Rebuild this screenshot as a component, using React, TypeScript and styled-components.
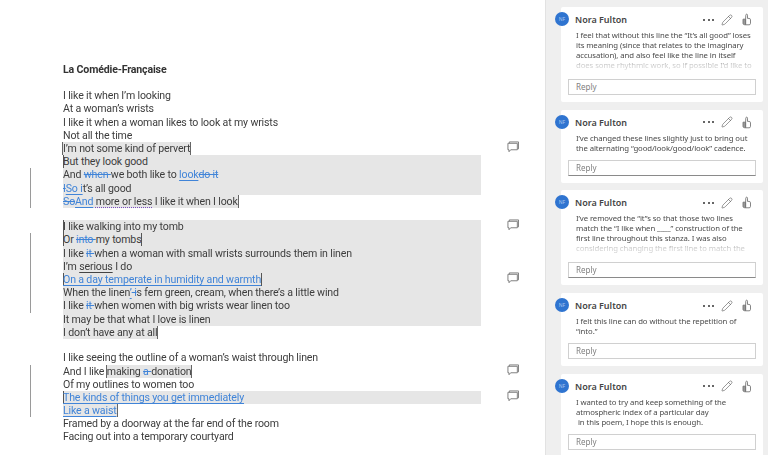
import React from 'react'
import styled, { createGlobalStyle, css } from 'styled-components'
import { Pencil } from 'lucide-react'

const GlobalStyle = createGlobalStyle`
    html, body {
        margin: 0;
        padding: 0;
        background: #fff;
    }
    #root {
        width: 768px;
        height: 455px;
        overflow: hidden;
    }
`

const Page = styled.div`
    display: flex;
    width: 768px;
    height: 455px;
    overflow: hidden;
    filter: blur(0.4px);
`

const Doc = styled.main`
    width: 545px;
    flex-shrink: 0;
    box-sizing: border-box;
    padding: 63px 64px 0 63px;
    font-family: 'Roboto', 'Noto Sans', sans-serif;
    font-size: 10.6px;
    letter-spacing: -0.16px;
    line-height: 13.18px;
    color: #3d3d3d;
`

const Title = styled.h1`
    margin: 0 0 13px;
    font: inherit;
    font-weight: 700;
    color: #333;
`

const Stanza = styled.section`
    margin-bottom: 12.4px;
`

const Line = styled.div<{ $full?: boolean; $changed?: boolean }>`
    position: relative;
    white-space: nowrap;
    ${({ $full }) =>
        $full &&
        css`
            background: #e6e6e6;
        `}
    ${({ $changed }) =>
        $changed &&
        css`
            &::before {
                content: '';
                position: absolute;
                left: -33px;
                top: 0;
                bottom: 0;
                width: 1px;
                background: #9a9a9a;
            }
        `}
`

const Mark = styled.span<{ $start?: boolean; $end?: boolean }>`
    background: #e6e6e6;
    display: inline-block;
    ${({ $start }) => $start && 'box-shadow: -1px 0 0 #666;'}
    ${({ $end }) => $end && 'border-right: 1px solid #666;'}
`

const Caret = styled.span`
    display: inline-block;
    width: 1px;
    height: 13px;
    margin-right: -1px;
    background: #555;
    vertical-align: top;
`

const Ins = styled.span`
    color: #4084d8;
    text-decoration: underline;
    text-underline-offset: 1.5px;
`

const Del = styled.span`
    color: #4084d8;
    text-decoration: line-through;
`

const Grammar = styled.span`
    text-decoration: underline dotted #7a4fc0;
    text-underline-offset: 1.5px;
`

const Spelling = styled.span`
    text-decoration: underline double #444;
    text-underline-offset: 1.5px;
    text-decoration-thickness: 0.5px;
`

const CommentMark = styled.svg`
    position: absolute;
    left: 444px;
    top: -1px;
    width: 12px;
    height: 12px;
    fill: none;
    stroke: #777;
    stroke-width: 1;
`

const CommentIcon = () => (
    <CommentMark viewBox="0 0 13 13">
        <path d="M2.5 2.5V1h10v7.5h-1" />
        <path d="M1 2.5h10.2v7H4L2.2 11.6V9.5H1z" />
    </CommentMark>
)

const Sidebar = styled.aside`
    flex: 1;
    box-sizing: border-box;
    height: 455px;
    overflow: hidden;
    padding: 7px 5px 0 15px;
    background: #efefef;
    border-left: 1px solid #e2e2e2;
    display: flex;
    flex-direction: column;
    gap: 7.7px;
    font-family: 'Noto Sans', 'Open Sans', sans-serif;
`

const Card = styled.article`
    position: relative;
    flex-shrink: 0;
    box-sizing: border-box;
    background: #fff;
    border-radius: 2px;
    padding: 6px 7px 7px 7px;
`

const Avatar = styled.div`
    position: absolute;
    left: -6px;
    top: 5px;
    width: 14px;
    height: 14px;
    border-radius: 50%;
    background: #2f74d0;
    color: #a9c6ee;
    font-size: 5px;
    line-height: 14px;
    text-align: center;
`

const Header = styled.header`
    display: flex;
    align-items: center;
    height: 13px;
    padding-left: 7px;
`

const Name = styled.strong`
    flex: 1;
    font-size: 9px;
    font-weight: 600;
    color: #444;
`

const Actions = styled.div`
    display: flex;
    align-items: center;
    gap: 7px;
    padding-right: 5px;
    color: #555;
`

const Dots = styled.span`
    display: flex;
    gap: 2.4px;

    i {
        width: 2px;
        height: 2px;
        border-radius: 50%;
        background: #333;
    }
`

const Thumb = styled.svg`
    width: 9px;
    height: 13px;
    margin-left: 2px;
    fill: none;
    stroke: #777;
    stroke-width: 0.9;
`

const ThumbIcon = () => (
    <Thumb viewBox="0 0 9 13">
        <path d="M1 6.2h2.6v5.6c-1.6 0-2.6-.4-2.6-1.4z" fill="#999" />
        <path d="M3.6 11.8V6.2L3.8 2.2c0-1.4 1.7-1.4 1.7 0v3.2h1.6c.9 0 1.4.6 1.4 1.4v3.6c0 .9-.6 1.4-1.4 1.4H3.6" />
    </Thumb>
)

const Body = styled.p<{ $faded?: boolean }>`
    margin: 4px 0 0;
    padding: 0 2px 0 8px;
    font-size: 7.75px;
    letter-spacing: -0.08px;
    line-height: 10px;
    color: #4a4a4a;
    white-space: pre;
    ${({ $faded }) =>
        $faded &&
        css`
            height: 40px;
            overflow: hidden;
            mask-image: linear-gradient(#000 72%, rgba(0, 0, 0, 0.25) 88%);
        `}
`

const Reply = styled.div<{ $active?: boolean; $gap: number }>`
    box-sizing: border-box;
    height: 16px;
    margin-top: ${({ $gap }) => $gap}px;
    padding-left: 7px;
    border: 1px solid #d0d0d0;
    ${({ $active }) => $active && 'border-bottom: 1.5px solid #8a8a8a;'}
    font-size: 8px;
    line-height: 14px;
    color: #808080;
`

type CommentProps = {
    text: string
    faded?: boolean
    active?: boolean
    gap: number
}

const Comment = ({ text, faded, active, gap }: CommentProps) => (
    <Card>
        <Avatar>NF</Avatar>
        <Header>
            <Name>Nora Fulton</Name>
            <Actions>
                <Dots>
                    <i />
                    <i />
                    <i />
                </Dots>
                <Pencil size={12} strokeWidth={1.2} />
                <ThumbIcon />
            </Actions>
        </Header>
        <Body $faded={faded}>{text}</Body>
        <Reply $active={active} $gap={gap}>
            Reply
        </Reply>
    </Card>
)

export default function App() {
    return (
        <>
            <GlobalStyle />
            <Page>
                <Doc>
                    <Title>La Comédie-Française</Title>
                    <Stanza>
                        <Line>I like it when I’m looking</Line>
                        <Line>At a woman’s wrists</Line>
                        <Line>I like it when a woman likes to look at my wrists</Line>
                        <Line>Not all the time</Line>
                        <Line>
                            <Mark $start $end>I’m not some kind of pervert</Mark>
                            <CommentIcon />
                        </Line>
                        <Line $full>
                            <Caret />
                            But they look good
                        </Line>
                        <Line $full $changed>
                            And <Del>when </Del>we both like to <Ins>look</Ins>
                            <Del>do it</Del>
                        </Line>
                        <Line $full $changed>
                            <Del>I</Del>
                            <Ins>So i</Ins>t’s all good
                        </Line>
                        <Line $changed>
                            <Mark $end>
                                <Del>So</Del>
                                <Ins>And</Ins> <Grammar>more or less</Grammar> I like it when I look
                            </Mark>
                        </Line>
                    </Stanza>
                    <Stanza>
                        <Line $full>
                            <Caret />I like walking into my tomb
                            <CommentIcon />
                        </Line>
                        <Line $full $changed>
                            <Caret />
                            Or <Del>into </Del>my tombs
                            <Caret />
                        </Line>
                        <Line $full $changed>
                            I like <Del>it </Del>when a woman with small wrists surrounds them in linen
                        </Line>
                        <Line $full $changed>
                            I’m <Spelling>serious</Spelling> I do
                        </Line>
                        <Line $full $changed>
                            <Caret />
                            <Ins>On a day temperate in humidity and warmth</Ins>
                            <Caret />
                            <CommentIcon />
                        </Line>
                        <Line $full $changed>
                            When the linen<Ins>’</Ins>
                            <Del> i</Del>s fern green, cream, when there’s a little wind
                        </Line>
                        <Line $full $changed>
                            I like <Del>it </Del>when women with big wrists wear linen too
                        </Line>
                        <Line $full>It may be that what I love is linen</Line>
                        <Line>
                            <Mark $end>I don’t have any at all</Mark>
                        </Line>
                    </Stanza>
                    <Stanza>
                        <Line>I like seeing the outline of a woman’s waist through linen</Line>
                        <Line $changed>
                            And I like{' '}
                            <Mark $start $end>
                                making <Del>a </Del>donation
                            </Mark>
                            <CommentIcon />
                        </Line>
                        <Line $changed>Of my outlines to women too</Line>
                        <Line $full $changed>
                            <Caret />
                            <Ins>The kinds of things you get immediately</Ins>
                            <CommentIcon />
                        </Line>
                        <Line $changed>
                            <Mark $end>
                                <Ins>Like a waist</Ins>
                            </Mark>
                        </Line>
                        <Line>Framed by a doorway at the far end of the room</Line>
                        <Line>Facing out into a temporary courtyard</Line>
                    </Stanza>
                </Doc>
                <Sidebar>
                    <Comment
                        faded
                        gap={9}
                        text={`I feel that without this line the “It’s all good” loses\nits meaning (since that relates to the imaginary\naccusation), and also feel like the line in itself\ndoes some rhythmic work, so if possible I’d like to`}
                    />
                    <Comment
                        active
                        gap={7}
                        text={`I’ve changed these lines slightly just to bring out\nthe alternating “good/look/good/look” cadence.`}
                    />
                    <Comment
                        active
                        faded
                        gap={9}
                        text={`I’ve removed the “it”s so that those two lines\nmatch the “I like when ____” construction of the\nfirst line throughout this stanza. I was also\nconsidering changing the first line to match the`}
                    />
                    <Comment
                        gap={7}
                        text={`I felt this line can do without the repetition of\n“into.”`}
                    />
                    <Comment
                        gap={7}
                        text={`I wanted to try and keep something of the\natmospheric index of a particular day\n in this poem, I hope this is enough.`}
                    />
                </Sidebar>
            </Page>
        </>
    )
}
